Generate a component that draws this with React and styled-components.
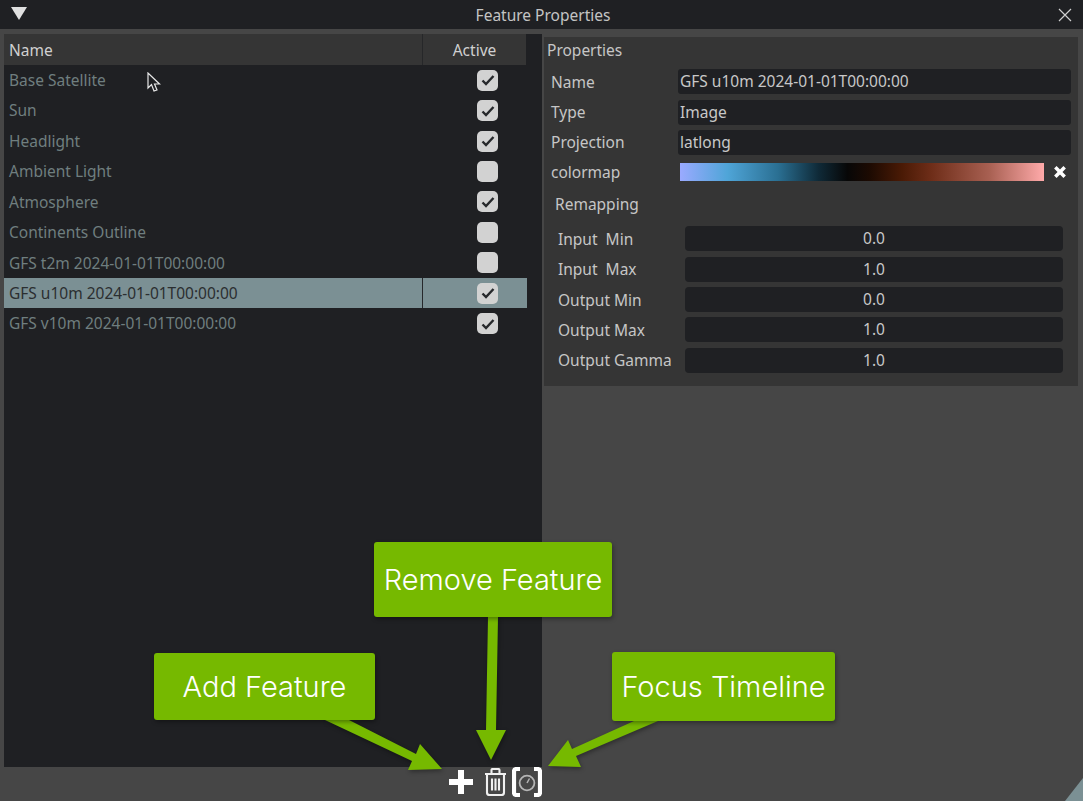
import React from "react"
import styled, { createGlobalStyle } from "styled-components"

const features = [
  { name: "Base Satellite", active: true },
  { name: "Sun", active: true },
  { name: "Headlight", active: true },
  { name: "Ambient Light", active: false },
  { name: "Atmosphere", active: true },
  { name: "Continents Outline", active: false },
  { name: "GFS t2m 2024-01-01T00:00:00", active: false },
  { name: "GFS u10m 2024-01-01T00:00:00", active: true, selected: true },
  { name: "GFS v10m 2024-01-01T00:00:00", active: true },
]

const props = [
  ["Name", "GFS u10m 2024-01-01T00:00:00"],
  ["Type", "Image"],
  ["Projection", "latlong"],
]

const remap = [
  ["Input  Min", "0.0"],
  ["Input  Max", "1.0"],
  ["Output Min", "0.0"],
  ["Output Max", "1.0"],
  ["Output Gamma", "1.0"],
]

const App = () => (
  <Window>
    <GlobalStyle />
    <TitleBar>
      <Collapse />
      <Title>Feature Properties</Title>
      <CloseIcon viewBox="0 0 14 14">
        <path d="M1 1 L13 13 M13 1 L1 13" />
      </CloseIcon>
    </TitleBar>
    <Body>
      <LeftColumn>
        <ListPanel>
          <HeaderRow>
            <HeadName>Name</HeadName>
            <HeadActive>Active</HeadActive>
          </HeaderRow>
          {features.map((f) => (
            <FeatureRow key={f.name} $selected={f.selected}>
              <FeatureName>{f.name}</FeatureName>
              <ActiveCell $selected={f.selected}>
                <Check>
                  {f.active && (
                    <svg width="14" height="12" viewBox="0 0 14 12">
                      <path d="M1.5 6.5 L5 10 L12.5 2" fill="none" stroke="#26282b" strokeWidth="2.4" />
                    </svg>
                  )}
                </Check>
              </ActiveCell>
            </FeatureRow>
          ))}
        </ListPanel>
        <Toolbar>
          <svg width="24" height="24" viewBox="0 0 24 24">
            <path d="M9 0 H15 V9 H24 V15 H15 V24 H9 V15 H0 V9 H9 Z" fill="#fff" />
          </svg>
          <TrashIcon viewBox="0 0 23 28">
            <path d="M1 6 H22 M7.5 6 V2 Q7.5 1 8.5 1 H14.5 Q15.5 1 15.5 2 V6" />
            <path d="M3 6 V24.5 Q3 27 5.5 27 H17.5 Q20 27 20 24.5 V6" />
            <path d="M8 10.5 V22.5 M11.5 10.5 V22.5 M15 10.5 V22.5" />
          </TrashIcon>
          <svg width="30" height="30" viewBox="0 0 30 30">
            <path
              d="M8 2 H4.5 Q2 2 2 4.5 V25.5 Q2 28 4.5 28 H8 M22 2 H25.5 Q28 2 28 4.5 V25.5 Q28 28 25.5 28 H22"
              fill="none"
              stroke="#fff"
              strokeWidth="4.2"
            />
            <circle cx="15" cy="16" r="7.4" fill="none" stroke="#b5b5b5" strokeWidth="1.8" />
            <path d="M15 16 L17.5 11.5" fill="none" stroke="#b5b5b5" strokeWidth="1.5" />
          </svg>
        </Toolbar>
      </LeftColumn>
      <PropertiesPanel>
        <PanelHeading>Properties</PanelHeading>
        {props.map(([label, value]) => (
          <PropRow key={label}>
            <PropLabel>{label}</PropLabel>
            <TextField>{value}</TextField>
          </PropRow>
        ))}
        <ColormapRow>
          <PropLabel>colormap</PropLabel>
          <Colormap />
          <ClearIcon viewBox="0 0 12 12">
            <path d="M2 2 L10 10 M10 2 L2 10" />
          </ClearIcon>
        </ColormapRow>
        <SubHeading>Remapping</SubHeading>
        {remap.map(([label, value]) => (
          <RemapRow key={label}>
            <RemapLabel>{label}</RemapLabel>
            <NumberField>{value}</NumberField>
          </RemapRow>
        ))}
      </PropertiesPanel>
    </Body>

    <Pointer width="14" height="21" viewBox="0 0 14 21">
      <path
        d="M1 1 V16 L4.5 12.5 L7 19 L10 18 L7.5 12 H12.5 Z"
        fill="#1f2023"
        stroke="#e8e8e8"
        strokeWidth="1.2"
      />
    </Pointer>

    <Arrows width="1083" height="801" viewBox="0 0 1083 801">
      <path d="M325 720 H349 L416 754 L420 744 L442 769 L408 770 L412 761 Z" />
      <path d="M488 617 H498 L496 730 H506 L491 760 L476 730 H486 Z" />
      <path d="M634 721 H658 L576 756 L581 767 L548 766 L568 740 L572 749 Z" />
    </Arrows>
    <AddCallout>Add Feature</AddCallout>
    <RemoveCallout>Remove Feature</RemoveCallout>
    <FocusCallout>Focus Timeline</FocusCallout>
    <Grip />
  </Window>
)

export default App

const GlobalStyle = createGlobalStyle`
  html, body {
    margin: 0;
    padding: 0;
    background: #464646;
  }
`

const Window = styled.div`
  position: relative;
  width: 1083px;
  height: 801px;
  overflow: hidden;
  background: #464646;
  font-family: "Noto Sans", "Open Sans", sans-serif;
  font-size: 15.5px;
  white-space: pre;
`

const TitleBar = styled.div`
  display: flex;
  align-items: center;
  justify-content: space-between;
  height: 29px;
  padding: 0 11px;
  background: #1f2023;
  box-sizing: border-box;
`

const Collapse = styled.div`
  width: 0;
  height: 0;
  border-left: 8px solid transparent;
  border-right: 8px solid transparent;
  border-top: 13px solid #e0e0e0;
  margin-top: -2px;
`

const Title = styled.div`
  color: #c4c4c4;
  margin-left: 1px;
`

const CloseIcon = styled.svg`
  width: 14px;
  height: 14px;
  fill: none;
  stroke: #d0d0d0;
  stroke-width: 1.2;
`

const Body = styled.div`
  display: flex;
  align-items: flex-start;
  gap: 2px;
  padding: 5px 4px 0;
`

const LeftColumn = styled.div`
  display: flex;
  flex-direction: column;
  width: 538px;
`

const ListPanel = styled.div`
  height: 733px;
  background: #1f2023;
`

const HeaderRow = styled.div`
  display: flex;
  width: 522px;
  height: 31px;
  background: #353535;
  color: #d0d0d0;
  line-height: 33px;
`

const HeadName = styled.div`
  width: 419px;
  padding-left: 5px;
  box-sizing: border-box;
  border-right: 1px solid #262729;
`

const HeadActive = styled.div`
  flex: 1;
  text-align: center;
`

const FeatureRow = styled.div`
  display: flex;
  width: 523px;
  height: 30.43px;
  align-items: stretch;
  background: ${(p) => (p.$selected ? "#7b9094" : "transparent")};
  color: ${(p) => (p.$selected ? "#2b2e30" : "#6f7e7f")};
`

const FeatureName = styled.div`
  width: 418px;
  padding-left: 5px;
  box-sizing: border-box;
  line-height: 31px;
`

const ActiveCell = styled.div`
  flex: 1;
  display: flex;
  align-items: center;
  padding-left: 54px;
  border-left: ${(p) => (p.$selected ? "1px solid #26282b" : "1px solid transparent")};
`

const Check = styled.div`
  width: 21px;
  height: 21px;
  display: flex;
  align-items: center;
  justify-content: center;
  border-radius: 5px;
  background: #d2d2d2;
`

const Toolbar = styled.div`
  display: flex;
  justify-content: flex-end;
  align-items: center;
  gap: 10px;
  height: 32px;
  margin-top: -1px;
  svg:first-child {
    margin-right: 1px;
  }
`

const TrashIcon = styled.svg`
  width: 23px;
  height: 28px;
  fill: none;
  stroke: #f0f0f0;
  stroke-width: 2.1;
  margin-right: -5px;
`

const PropertiesPanel = styled.div`
  width: 534px;
  height: 349px;
  margin-top: 3px;
  padding: 0 7px 0 3px;
  box-sizing: border-box;
  background: #353535;
  color: #c6c6c6;
`

const PanelHeading = styled.div`
  height: 29.5px;
  line-height: 27px;
`

const PropRow = styled.div`
  display: flex;
  align-items: center;
  height: 30.4px;
  padding-left: 4px;
`

const ColormapRow = styled(PropRow)`
  height: 28.4px;
`

const PropLabel = styled.div`
  width: 127px;
  flex: none;
`

const TextField = styled.div`
  width: 393px;
  height: 25px;
  line-height: 25px;
  padding-left: 2px;
  box-sizing: border-box;
  border-radius: 3px;
  background: #1f2023;
  color: #c8c8c8;
`

const Colormap = styled.div`
  width: 364px;
  height: 18px;
  margin-left: 2px;
  background: linear-gradient(
    to right,
    #9aaaff 0%,
    #4fa5d8 13%,
    #2a6f92 27%,
    #0f2a38 38%,
    #070707 46%,
    #1c0a02 52%,
    #4a1a05 61%,
    #6e2d18 69%,
    #a86052 85%,
    #ffaaaa 100%
  );
`

const ClearIcon = styled.svg`
  width: 14px;
  height: 14px;
  margin-left: 9px;
  fill: none;
  stroke: #fff;
  stroke-width: 3;
`

const SubHeading = styled.div`
  height: 36.5px;
  line-height: 35px;
  padding-left: 8px;
  margin-top: 1px;
`

const RemapRow = styled.div`
  display: flex;
  align-items: center;
  height: 30.4px;
  padding-left: 11px;
`

const RemapLabel = styled.div`
  width: 127px;
  flex: none;
`

const NumberField = styled.div`
  width: 378px;
  height: 25px;
  line-height: 25px;
  text-align: center;
  border-radius: 4px;
  background: #1f2023;
  color: #c8c8c8;
`

const Pointer = styled.svg`
  position: absolute;
  left: 147px;
  top: 72px;
`

const Arrows = styled.svg`
  position: absolute;
  left: 0;
  top: 0;
  fill: #76b900;
  filter: drop-shadow(1px 2px 2px rgba(0, 0, 0, 0.35));
`

const Callout = styled.div`
  position: absolute;
  display: flex;
  align-items: center;
  justify-content: center;
  border-radius: 3px;
  background: #76b900;
  color: #fff;
  font-family: "Inter", "Noto Sans", sans-serif;
  font-weight: 300;
  font-size: 29px;
  box-shadow: 1px 2px 4px rgba(0, 0, 0, 0.35);
`

const AddCallout = styled(Callout)`
  left: 154px;
  top: 653px;
  width: 221px;
  height: 67px;
`

const RemoveCallout = styled(Callout)`
  left: 374px;
  top: 542px;
  width: 238px;
  height: 75px;
`

const FocusCallout = styled(Callout)`
  left: 612px;
  top: 652px;
  width: 223px;
  height: 69px;
`

const Grip = styled.div`
  position: absolute;
  right: 0;
  bottom: 0;
  width: 18px;
  height: 23px;
  background: #7b9094;
  clip-path: polygon(100% 0, 100% 100%, 0 100%);
`
